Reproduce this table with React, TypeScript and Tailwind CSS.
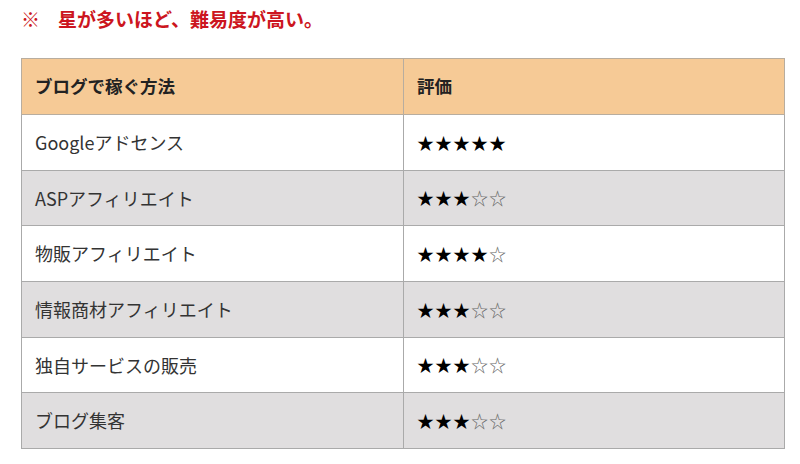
import React from 'react'

const rows = [
  { name: "Googleアドセンス", stars: 5 },
  { name: "ASPアフィリエイト", stars: 3 },
  { name: "物販アフィリエイト", stars: 4 },
  { name: "情報商材アフィリエイト", stars: 3 },
  { name: "独自サービスの販売", stars: 3 },
  { name: "ブログ集客", stars: 3 },
];

const Stars = ({ n }: { n: number }) => (
  <span className="tracking-[1px] text-[17px] text-black">
    {"★".repeat(n)}
    <span className="text-[#666]">{"☆".repeat(5 - n)}</span>
  </span>
);

const App = () => {
  return (
    <div className="w-[800px] h-[464px] bg-white font-['Noto_Sans_CJK_JP','Noto_Sans',sans-serif] text-[#333]">
      <div className="pt-[5px] pl-[21px] h-[58px]">
        <p className="text-[19px] font-bold text-[#cc1520] leading-[28px]">
          <span className="mr-[18px]">※</span>星が多いほど、難易度が高い。
        </p>
      </div>
      <table className="ml-[21px] w-[764px] border-collapse table-fixed">
        <thead>
          <tr className="bg-[#f6ca96] h-[56px]">
            <th className="w-[382px] border border-[#b8ad9f] text-left font-bold text-[17.5px] text-[#222] pl-[13px]">ブログで稼ぐ方法</th>
            <th className="border border-[#b8ad9f] text-left font-bold text-[17.5px] text-[#222] pl-[13px]">評価</th>
          </tr>
        </thead>
        <tbody>
          {rows.map((r, i) => (
            <tr key={i} className={`h-[55.7px] ${i % 2 === 1 ? 'bg-[#e0dedf]' : 'bg-white'}`}>
              <td className="border border-[#aaaaaa] text-[18px] pl-[13px]">{r.name}</td>
              <td className="border border-[#aaaaaa] pl-[13px]"><Stars n={r.stars} /></td>
            </tr>
          ))}
        </tbody>
      </table>
    </div>
  )
}

export default App
